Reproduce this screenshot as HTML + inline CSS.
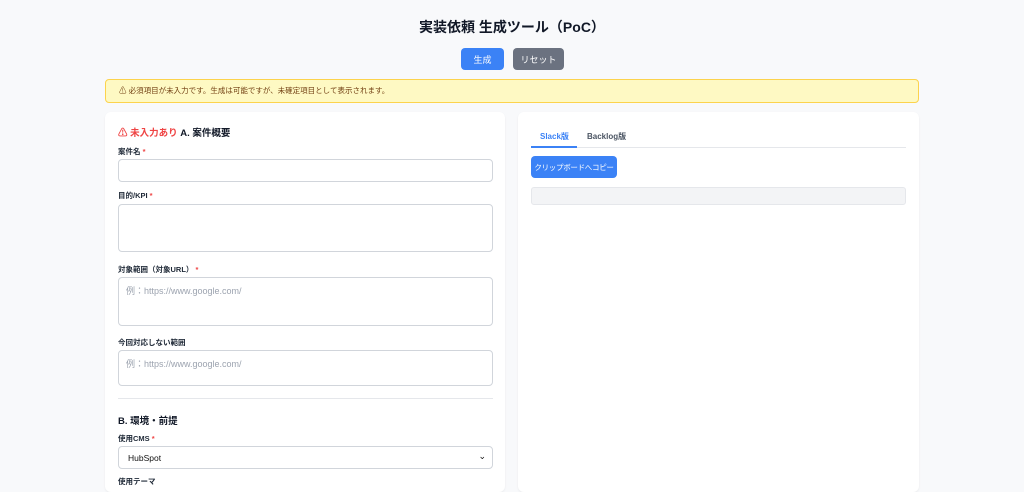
<!DOCTYPE html>
<html><head><meta charset="utf-8"><style>
*{box-sizing:border-box;margin:0;padding:0}
body{width:1024px;height:480px;overflow:hidden;background:#f8f9fb;font-family:"Liberation Sans","Noto Sans CJK JP",sans-serif;color:#111827;position:relative}
.a{position:absolute}
.title{left:0;width:1024px;top:17px;text-align:center;font-size:14px;font-weight:700}
.btn{border-radius:4px;color:#fff;font-size:9px;display:flex;align-items:center;justify-content:center;white-space:nowrap}
.alert{left:105px;top:79px;width:814px;height:24px;background:#fef9c3;border:1px solid #fcd34d;border-radius:4px;font-size:7.5px;color:#713f12;padding:0 0 0 13px;line-height:22px}
.card{background:#fff;border-radius:6px;box-shadow:0 1px 2px rgba(0,0,0,.06)}
.lbl{left:118px;font-size:7.5px;font-weight:700;color:#1f2937}
.lbl i{color:#ef4444;font-style:normal}
.in{left:118px;width:375px;border:1px solid #d1d5db;border-radius:4px;background:#fff}
.ph{font-size:9px;color:#9ca3af;padding:6px 0 0 7px}
h3{font-size:9.5px;font-weight:700}
</style></head><body>
<div class="a title">実装依頼 生成ツール（PoC）</div>
<div class="a btn" style="left:461px;top:48px;width:43px;height:22px;background:#3b82f6">生成</div>
<div class="a btn" style="left:513px;top:48px;width:51px;height:22px;background:#6b7280">リセット</div>
<div class="a alert">⚠ 必須項目が未入力です。生成は可能ですが、未確定項目として表示されます。</div>
<div class="a card" style="left:105px;top:112px;width:400px;height:380px"></div>
<div class="a card" style="left:518px;top:112px;width:401px;height:380px"></div>
<h3 class="a" style="left:118px;top:125px"><span style="color:#ef4444">⚠ 未入力あり</span> A. 案件概要</h3>
<div class="a lbl" style="top:146px">案件名 <i>*</i></div>
<div class="a in" style="top:159px;height:23px"></div>
<div class="a lbl" style="top:190px">目的/KPI <i>*</i></div>
<div class="a in" style="top:204px;height:48px"></div>
<div class="a lbl" style="top:264px">対象範囲（対象URL） <i>*</i></div>
<div class="a in ph" style="top:277px;height:49px">例：https://www.google.com/</div>
<div class="a lbl" style="top:337px">今回対応しない範囲</div>
<div class="a in ph" style="top:350px;height:36px">例：https://www.google.com/</div>
<div class="a" style="left:118px;top:398px;width:375px;height:1px;background:#e5e7eb"></div>
<h3 class="a" style="left:118px;top:413px">B. 環境・前提</h3>
<div class="a lbl" style="top:433px">使用CMS <i>*</i></div>
<div class="a in" style="top:446px;height:23px;font-size:8.5px;padding:6px 0 0 9px;color:#111">HubSpot<span style="position:absolute;right:6px;top:4px;font-size:9px">⌄</span></div>
<div class="a lbl" style="top:476px">使用テーマ</div>
<div class="a" style="left:531px;top:147px;width:375px;height:1px;background:#e5e7eb"></div>
<div class="a" style="left:531px;top:146px;width:46px;height:2px;background:#3b82f6"></div>
<div class="a" style="left:540px;top:131px;font-size:8px;font-weight:700;color:#3b82f6">Slack版</div>
<div class="a" style="left:587px;top:131px;font-size:8px;font-weight:700;color:#4b5563">Backlog版</div>
<div class="a btn" style="left:531px;top:156px;width:86px;height:22px;background:#3b82f6;font-size:7.5px;letter-spacing:-0.3px">クリップボードへコピー</div>
<div class="a" style="left:531px;top:187px;width:375px;height:18px;background:#f3f4f6;border:1px solid #e5e7eb;border-radius:3px"></div>
</body></html>
